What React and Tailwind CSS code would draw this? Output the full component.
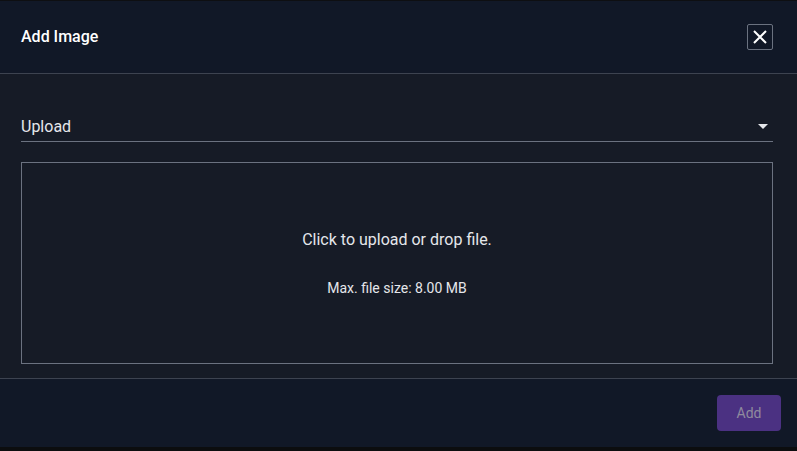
import React from "react";

const AddImageModal = () => {
  return (
    <div className="flex flex-col h-[451px] w-[797px] bg-[#0c0d0f] font-['Roboto',sans-serif] overflow-hidden">
      <div className="h-px bg-[#0e0f12]" />

      {/* header */}
      <div className="flex items-center justify-between h-[73px] pl-[21px] pr-[24px] bg-[#111827] border-b border-[#3d4350]">
        <h2 className="text-[16px] font-medium text-white">Add Image</h2>
        <button className="flex items-center justify-center w-[26px] h-[26px] border border-[#6b7280] rounded-[2px] text-white">
          <svg width="18" height="18" viewBox="0 0 18 18" fill="none" stroke="currentColor" strokeWidth="2">
            <path d="M3 3 L15 15 M15 3 L3 15" />
          </svg>
        </button>
      </div>

      {/* body */}
      <div className="flex flex-col h-[305px] pl-[21px] pr-[24px] pt-[18px] bg-[#161b26] border-b border-[#3d4350]">
        <div className="flex items-end justify-between h-[50px] border-b border-[#6b7280] pb-[2px] pr-[5px]">
          <span className="text-[16px] leading-[24px] text-[#e5e7eb]">Upload</span>
          <svg width="10" height="5" viewBox="0 0 10 5" className="mb-[10px]">
            <path d="M0 0 L10 0 L5 5 Z" fill="#e5e7eb" />
          </svg>
        </div>
        <div className="mt-[20px] h-[202px] flex flex-col items-center justify-center border border-[#6b7280] text-[#e5e7eb]">
          <p className="text-[16px]">Click to upload or drop file.</p>
          <p className="text-[14px] mt-[26px]">Max. file size: 8.00 MB</p>
        </div>
      </div>

      {/* footer */}
      <div className="flex justify-end items-start h-[68px] pt-[16px] px-[16px] bg-[#111827]">
        <button className="h-[36px] w-[64px] rounded-[4px] bg-[#4b3182] text-[14px] text-[#8f8a9e]">
          Add
        </button>
      </div>
    </div>
  );
};

export default function App() {
  return <AddImageModal />;
}
